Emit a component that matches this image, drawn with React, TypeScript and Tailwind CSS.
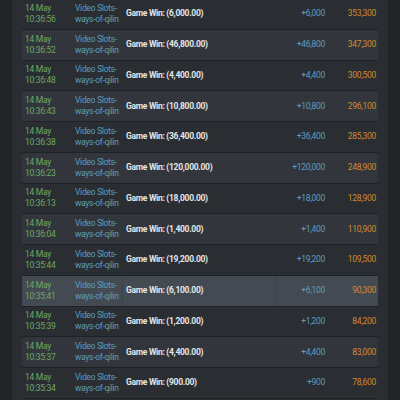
const ROWS = [
  { time: '10:36:56', desc: '6,000.00', change: '+6,000', balance: '353,300' },
  { time: '10:36:52', desc: '46,800.00', change: '+46,800', balance: '347,300' },
  { time: '10:36:48', desc: '4,400.00', change: '+4,400', balance: '300,500' },
  { time: '10:36:43', desc: '10,800.00', change: '+10,800', balance: '296,100' },
  { time: '10:36:38', desc: '36,400.00', change: '+36,400', balance: '285,300' },
  { time: '10:36:23', desc: '120,000.00', change: '+120,000', balance: '248,900' },
  { time: '10:36:13', desc: '18,000.00', change: '+18,000', balance: '128,900' },
  { time: '10:36:04', desc: '1,400.00', change: '+1,400', balance: '110,900' },
  { time: '10:35:44', desc: '19,200.00', change: '+19,200', balance: '109,500' },
  { time: '10:35:41', desc: '6,100.00', change: '+6,100', balance: '90,300', active: true },
  { time: '10:35:39', desc: '1,200.00', change: '+1,200', balance: '84,200' },
  { time: '10:35:37', desc: '4,400.00', change: '+4,400', balance: '83,000' },
  { time: '10:35:34', desc: '900.00', change: '+900', balance: '78,600' },
]

export default function App() {
  return (
    <div className="w-[400px] h-[400px] overflow-hidden bg-[#222528] px-[12px] font-['Roboto',sans-serif]">
      <div className="h-full bg-[#2a2d32] px-[10px] overflow-hidden">
        <div className="-mt-px">
          {ROWS.map((r, i) => (
            <div
              key={r.time}
              className={
                'flex h-[30.75px] items-center whitespace-nowrap border-b border-[#1f2225] text-[8.5px] tracking-[-0.3px] leading-[11px] ' +
                (r.active ? 'bg-[#444a52]' : i % 2 === 0 ? 'bg-[#2a2e33]' : 'bg-[#32363c]')
              }
            >
              <div className="w-[50px] pl-[3px] text-[#6ca963]">
                <div>14 May</div>
                <div>{r.time}</div>
              </div>
              <div
                className={
                  'w-[51px] h-full flex flex-col justify-center pl-[3px] text-[#5d9cba] border-r ' +
                  (r.active ? 'border-[#3c4249]' : 'border-transparent')
                }
              >
                <div>Video Slots-</div>
                <div>ways-of-qilin</div>
              </div>
              <div
                className={
                  'w-[154px] h-full flex items-center pl-[3px] font-bold text-[#e4e6e8] border-r ' +
                  (r.active ? 'border-[#3c4249]' : 'border-transparent')
                }
              >
                Game Win: ({r.desc})
              </div>
              <div className="w-[48px] text-right text-[#5d9cba]">{r.change}</div>
              <div className="flex-1 pr-[2px] text-right text-[#d08b2c]">{r.balance}</div>
            </div>
          ))}
        </div>
      </div>
    </div>
  )
}
